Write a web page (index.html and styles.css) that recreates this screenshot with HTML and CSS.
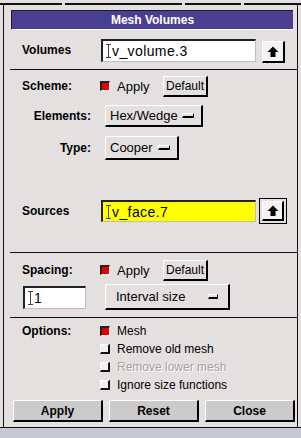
FILE: index.html
```html
<!DOCTYPE html>
<html lang="en">
<head>
  <meta charset="UTF-8" />
  <title>Mesh Volumes</title>
  <link rel="stylesheet" href="styles.css">
</head>
<body>

  <div class="tabs">
    <span class="tab t1"></span>
    <span class="tab t2"></span>
    <span class="tab t3"></span>
    <span class="tab t4"></span>
  </div>

  <div class="frame">
    <div class="title">Mesh Volumes</div>

    <div class="section s-volumes">
      <div class="row r-volumes">
        <span class="label">Volumes</span>
        <div class="field f-volumes"><span class="caret"></span>v_volume.3</div>
        <span class="arrow-btn">
          <svg width="12" height="12" viewBox="0 0 12 12"><path d="M6 0.5 L11.5 6 H8.5 V11 H3.5 V6 H0.5 Z" fill="#000"/></svg>
        </span>
      </div>
    </div>

    <div class="section s-scheme">
      <div class="row r-scheme">
        <span class="label">Scheme:</span>
        <span class="check on"></span>
        <span class="check-text">Apply</span>
        <span class="btn-default">Default</span>
      </div>
      <div class="row r-elements">
        <span class="label right">Elements:</span>
        <div class="option o-elements">Hex/Wedge<span class="indicator"></span></div>
      </div>
      <div class="row r-type">
        <span class="label right">Type:</span>
        <div class="option o-type">Cooper<span class="indicator"></span></div>
      </div>
      <div class="row r-sources">
        <span class="label">Sources</span>
        <div class="field f-sources"><span class="caret"></span>v_face.7</div>
        <span class="arrow-btn default">
          <svg width="12" height="12" viewBox="0 0 12 12"><path d="M6 0.5 L11.5 6 H8.5 V11 H3.5 V6 H0.5 Z" fill="#000"/></svg>
        </span>
      </div>
    </div>

    <div class="section s-spacing">
      <div class="row r-spacing">
        <span class="label">Spacing:</span>
        <span class="check on"></span>
        <span class="check-text">Apply</span>
        <span class="btn-default">Default</span>
      </div>
      <div class="row r-interval">
        <div class="field f-spacing"><span class="caret"></span>1</div>
        <div class="option o-interval">Interval size<span class="indicator"></span></div>
      </div>
    </div>

    <div class="section s-options">
      <div class="row r-opt">
        <span class="label">Options:</span>
        <span class="check on"></span>
        <span class="opt-text">Mesh</span>
      </div>
      <div class="row r-opt">
        <span class="label"></span>
        <span class="check off"></span>
        <span class="opt-text">Remove old mesh</span>
      </div>
      <div class="row r-opt">
        <span class="label"></span>
        <span class="check off"></span>
        <span class="opt-text disabled">Remove lower mesh</span>
      </div>
      <div class="row r-opt">
        <span class="label"></span>
        <span class="check off"></span>
        <span class="opt-text">Ignore size functions</span>
      </div>
    </div>

    <div class="actions">
      <span class="action">Apply</span>
      <span class="action">Reset</span>
      <span class="action">Close</span>
    </div>
  </div>

  <div class="footer"></div>

</body>
</html>
```

FILE: styles.css
```css
* {
  margin: 0;
  padding: 0;
  box-sizing: border-box;
}

body {
  font-family: "Liberation Sans", Arial, sans-serif;
  font-size: 13px;
  color: #000;
  background-color: #e4e0e0;
  width: 301px;
  height: 438px;
  overflow: hidden;
}

/* top tab strip, only its lower edge is visible */
.tabs {
  display: flex;
  gap: 3px;
  height: 5px;
}

.tab {
  border-bottom: 2px solid #111;
}

.t1 { width: 62px; }
.t2 { width: 117px; }
.t3 { width: 56px; }
.t4 { flex: 1; }

.frame {
  margin-left: 3px;
  width: 295px;
  height: 422px;
  border-left: 1px solid #111;
  border-right: 1px solid #111;
  padding-top: 5px;
}

.title {
  margin: 0 4px 0 7px;
  height: 20px;
  background-color: #4a3f92;
  border-top: 1px solid #1a1a2a;
  border-left: 1px solid #1a1a2a;
  border-bottom: 1px solid #fff;
  color: #fff;
  font-weight: bold;
  font-size: 12px;
  text-align: center;
  line-height: 18px;
}

.section {
  margin-left: 6px;
  border-top: 1px solid #111;
}

.s-volumes {
  border-top: none;
  padding: 8px 0 7px;
}

.s-scheme {
  padding: 4px 0 28px;
}

.s-spacing {
  padding: 5px 0 7px;
}

.s-options {
  padding-top: 4px;
}

.row {
  display: flex;
  align-items: center;
  padding-left: 12px;
  height: 24px;
}

.label {
  width: 79px;
  flex-shrink: 0;
  font-weight: bold;
  font-size: 12px;
}

.label.right {
  width: 69px;
  margin-right: 14px;
  text-align: right;
}

/* text fields */
.field {
  display: flex;
  align-items: center;
  height: 23px;
  padding-left: 3px;
  background-color: #fff;
  border-top: 2px solid #222;
  border-left: 2px solid #222;
  border-right: 1px solid #c0bcbc;
  border-bottom: 1px solid #c0bcbc;
  font-size: 14px;
  letter-spacing: 0.4px;
}

.f-volumes {
  width: 155px;
}

.f-sources {
  width: 155px;
  height: 22px;
  background-color: #ffff00;
}

.f-spacing {
  width: 63px;
  margin-left: 1px;
}

.caret {
  display: inline-block;
  width: 5px;
  height: 14px;
  margin-right: 1px;
  border-top: 1px solid #444;
  border-bottom: 1px solid #444;
  background: linear-gradient(#444, #444) center / 1px 100% no-repeat;
}

/* arrow push buttons */
.arrow-btn {
  display: flex;
  align-items: center;
  justify-content: center;
  width: 23px;
  height: 22px;
  margin-left: 6px;
  background-color: #f4f2f2;
  border-top: 1px solid #fff;
  border-left: 1px solid #fff;
  border-right: 2px solid #000;
  border-bottom: 2px solid #000;
}

.r-volumes .arrow-btn {
  align-self: flex-start;
  margin-top: 3px;
}

.arrow-btn.default {
  width: 22px;
  height: 20px;
  margin-left: 6px;
  outline: 1px solid #000;
  outline-offset: 2px;
}

.r-sources {
  height: 26px;
  margin-top: 38px;
}

/* toggles */
.check {
  width: 10px;
  height: 10px;
  margin-left: -1px;
  flex-shrink: 0;
}

.check.on {
  background-color: #e80000;
  border-top: 2px solid #222;
  border-left: 2px solid #222;
  border-right: 1px solid #fff;
  border-bottom: 1px solid #fff;
}

.check.off {
  background-color: #f2f0f0;
  border-top: 1px solid #fff;
  border-left: 1px solid #fff;
  border-right: 2px solid #111;
  border-bottom: 2px solid #111;
}

.check-text {
  width: 46px;
  margin-left: 7px;
}

.btn-default {
  display: flex;
  align-items: center;
  justify-content: center;
  width: 45px;
  height: 21px;
  font-size: 12px;
  border-top: 1px solid #fff;
  border-left: 1px solid #fff;
  border-right: 2px solid #000;
  border-bottom: 2px solid #000;
}

.r-scheme .btn-default {
  margin-top: 1px;
}

/* option menus */
.option {
  display: flex;
  align-items: center;
  height: 22px;
  padding-left: 4px;
  border-top: 1px solid #fff;
  border-left: 1px solid #fff;
  border-right: 2px solid #000;
  border-bottom: 2px solid #000;
}

.indicator {
  width: 12px;
  height: 5px;
  margin-left: auto;
  margin-right: 7px;
  border-top: 1px solid #fff;
  border-left: 1px solid #fff;
  border-right: 1px solid #000;
  border-bottom: 2px solid #000;
}

.r-elements {
  margin-top: 6px;
}

.o-elements {
  width: 98px;
}

.r-type {
  margin-top: 8px;
}

.o-type {
  width: 74px;
  height: 24px;
}

.r-interval {
  height: 26px;
  margin-top: 2px;
}

.o-interval {
  width: 125px;
  height: 26px;
  margin-left: 19px;
  padding-left: 10px;
}

.o-interval .indicator {
  width: 10px;
  margin-right: 10px;
}

/* options list */
.r-opt {
  height: 18px;
}

.opt-text {
  margin-left: 7px;
  font-size: 12px;
}

.opt-text.disabled {
  color: #a4a0a0;
  text-shadow: 1px 1px 0 #fff;
}

/* bottom buttons */
.actions {
  display: flex;
  gap: 6px;
  width: 282px;
  margin: 6px 0 0 9px;
}

.action {
  flex: 1;
  height: 22px;
  display: flex;
  align-items: center;
  justify-content: center;
  background-color: #cbcbcb;
  border-top: 1px solid #fff;
  border-left: 1px solid #fff;
  border-right: 2px solid #000;
  border-bottom: 2px solid #000;
  font-weight: bold;
  font-size: 12px;
}

.footer {
  height: 11px;
  background-color: #c8c8d4;
  border-top: 1px solid #111;
}
```
